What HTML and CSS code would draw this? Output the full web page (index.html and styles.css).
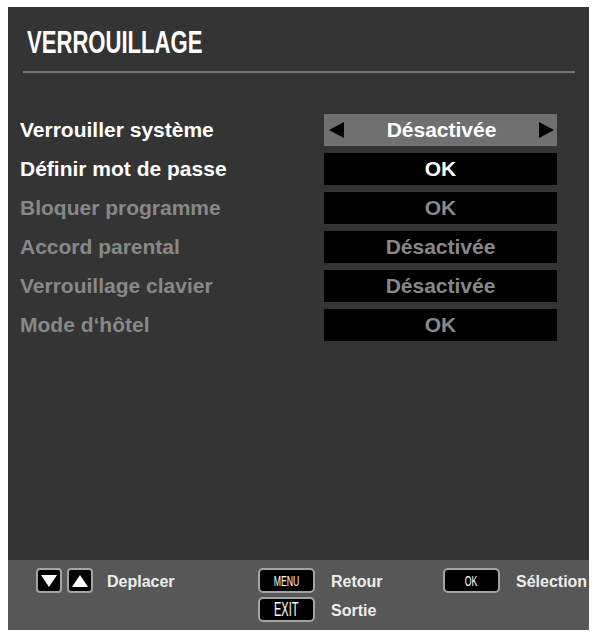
FILE: index.html
```html
<!DOCTYPE html>
<html lang="fr">

<head>
    <meta charset="UTF-8">
    <meta name="viewport" content="width=device-width, initial-scale=1.0">
    <title>Verrouillage</title>
    <link rel="stylesheet" href="styles.css">
</head>

<body>
    <div class="screen">
        <!-- Menu panel -->
        <div class="panel">
            <h1 class="title"><span>VERROUILLAGE</span></h1>
            <div class="divider"></div>
            <div class="menu">
                <div class="row">
                    <div class="label">Verrouiller système</div>
                    <div class="value selected">
                        <svg class="arrow" width="15" height="16" viewBox="0 0 15 16"><polygon points="15,0 15,16 0,8" /></svg>
                        <span>Désactivée</span>
                        <svg class="arrow" width="15" height="16" viewBox="0 0 15 16"><polygon points="0,0 0,16 15,8" /></svg>
                    </div>
                </div>
                <div class="row">
                    <div class="label">Définir mot de passe</div>
                    <div class="value">OK</div>
                </div>
                <div class="row disabled">
                    <div class="label">Bloquer programme</div>
                    <div class="value">OK</div>
                </div>
                <div class="row disabled">
                    <div class="label">Accord parental</div>
                    <div class="value">Désactivée</div>
                </div>
                <div class="row disabled">
                    <div class="label">Verrouillage clavier</div>
                    <div class="value">Désactivée</div>
                </div>
                <div class="row disabled">
                    <div class="label">Mode d‘hôtel</div>
                    <div class="value">OK</div>
                </div>
            </div>
        </div>

        <!-- Help bar -->
        <div class="footer">
            <div class="group move">
                <div class="hint">
                    <div class="keys">
                        <div class="key square">
                            <svg width="16" height="12" viewBox="0 0 16 12"><polygon points="0,0 16,0 8,12" /></svg>
                        </div>
                        <div class="key square">
                            <svg width="16" height="12" viewBox="0 0 16 12"><polygon points="8,0 16,12 0,12" /></svg>
                        </div>
                    </div>
                    <span class="text">Deplacer</span>
                </div>
            </div>
            <div class="group back">
                <div class="hint">
                    <div class="key wide"><span class="small">MENU</span></div>
                    <span class="text">Retour</span>
                </div>
                <div class="hint">
                    <div class="key wide"><span class="big">EXIT</span></div>
                    <span class="text">Sortie</span>
                </div>
            </div>
            <div class="group">
                <div class="hint">
                    <div class="key wide"><span class="small">OK</span></div>
                    <span class="text">Sélection</span>
                </div>
            </div>
        </div>
    </div>
</body>

</html>
```

FILE: styles.css
```css
body {
    margin: 0;
    background-color: white;
    font-family: "Liberation Sans", Arial, sans-serif;
    font-weight: bold;
}

.screen {
    width: 581px;
    margin: 7px 0 0 8px;
    overflow: hidden;
}

.panel {
    height: 553px;
    background-color: #343434;
    box-sizing: border-box;
    padding-top: 19px;
}

.title {
    margin: 0 0 0 19px;
    height: 32px;
    font-size: 32px;
    line-height: 32px;
    color: white;
    white-space: nowrap;
}

.title span {
    display: inline-block;
    transform: scaleX(0.69);
    transform-origin: left center;
}

.divider {
    margin: 13px 0 0 15px;
    width: 552px;
    height: 2px;
    background-color: #747474;
    box-shadow: 0 1px 1px #3c3c3c;
}

.menu {
    margin-top: 41px;
    padding-left: 12px;
    display: flex;
    flex-direction: column;
    gap: 7px;
}

.row {
    display: flex;
    height: 32px;
    font-size: 21px;
    line-height: 32px;
    color: white;
}

.label {
    width: 304px;
    white-space: nowrap;
}

.value {
    width: 233px;
    background-color: black;
    text-align: center;
}

.value.selected {
    display: flex;
    align-items: center;
    justify-content: space-between;
    padding: 0 3px 0 5px;
    box-sizing: border-box;
    background-color: #707070;
}

.arrow {
    fill: black;
}

.disabled {
    color: #888888;
}

.footer {
    height: 70px;
    box-sizing: border-box;
    padding: 8px 0 0 28px;
    background-color: #575757;
    display: flex;
    align-items: flex-start;
    font-size: 16px;
    color: #eeeeee;
}

.group {
    display: flex;
    flex-direction: column;
    gap: 4px;
}

.move {
    width: 222px;
}

.back {
    width: 185px;
}

.hint {
    display: flex;
    align-items: center;
    gap: 16px;
    white-space: nowrap;
}

.move .hint {
    gap: 14px;
}

.text {
    padding-top: 3px;
}

.keys {
    display: flex;
    gap: 5px;
}

.key {
    box-sizing: border-box;
    background-color: black;
    border: 2px solid #a4a4a4;
    border-radius: 5px;
    display: flex;
    align-items: center;
    justify-content: center;
    color: white;
    font-weight: normal;
}

.key.square {
    width: 26px;
    height: 25px;
    border-radius: 4px;
}

.key.square svg {
    fill: white;
}

.key.wide {
    width: 57px;
    height: 25px;
}

.small {
    display: inline-block;
    font-size: 14px;
    transform: scaleX(0.62);
}

.big {
    display: inline-block;
    font-size: 20px;
    transform: scaleX(0.55);
}
```
